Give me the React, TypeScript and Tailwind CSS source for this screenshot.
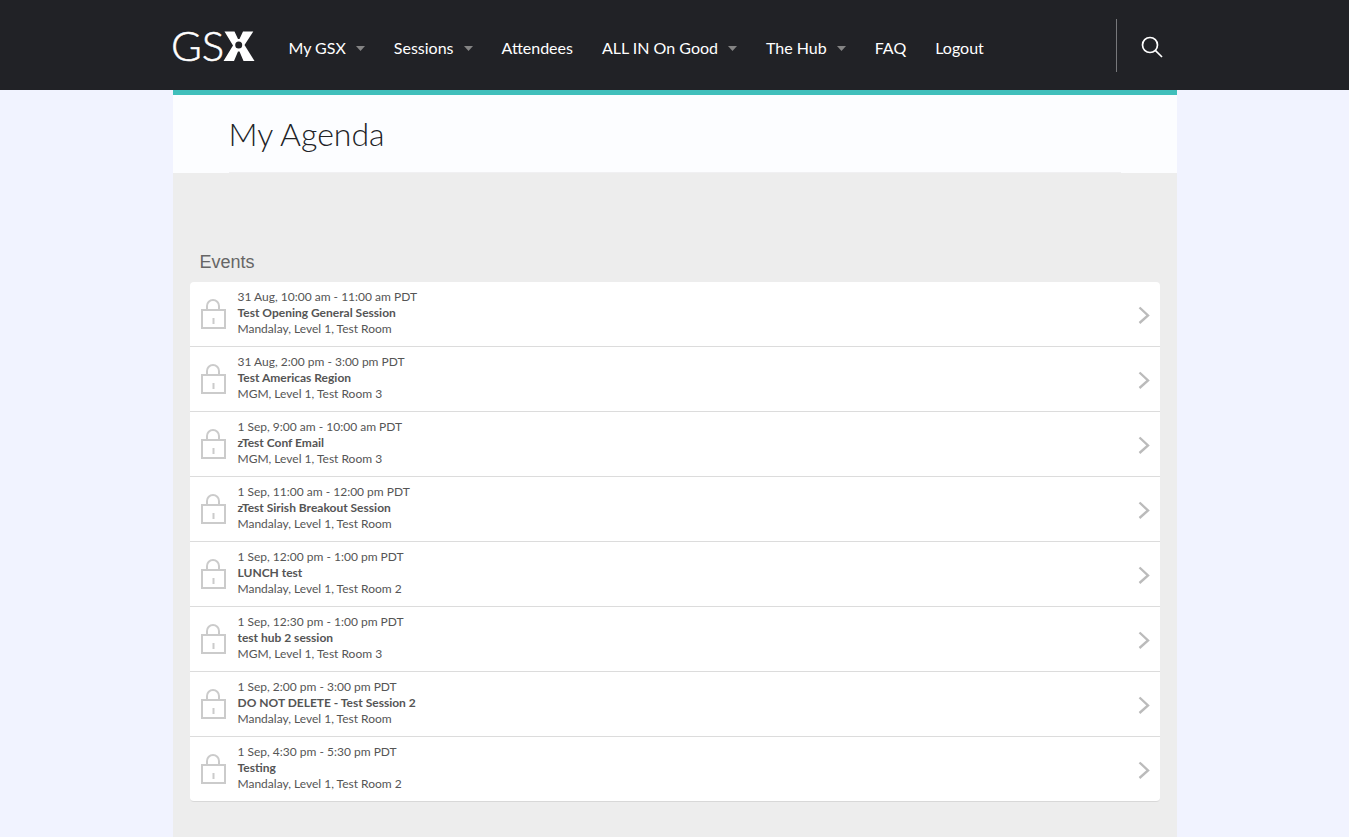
type NavItem = { label: string; menu?: boolean };

const navItems: NavItem[] = [
  { label: "My GSX", menu: true },
  { label: "Sessions", menu: true },
  { label: "Attendees" },
  { label: "ALL IN On Good", menu: true },
  { label: "The Hub", menu: true },
  { label: "FAQ" },
  { label: "Logout" },
];

const events = [
  { time: "31 Aug, 10:00 am - 11:00 am PDT", title: "Test Opening General Session", place: "Mandalay, Level 1, Test Room" },
  { time: "31 Aug, 2:00 pm - 3:00 pm PDT", title: "Test Americas Region", place: "MGM, Level 1, Test Room 3" },
  { time: "1 Sep, 9:00 am - 10:00 am PDT", title: "zTest Conf Email", place: "MGM, Level 1, Test Room 3" },
  { time: "1 Sep, 11:00 am - 12:00 pm PDT", title: "zTest Sirish Breakout Session", place: "Mandalay, Level 1, Test Room" },
  { time: "1 Sep, 12:00 pm - 1:00 pm PDT", title: "LUNCH test", place: "Mandalay, Level 1, Test Room 2" },
  { time: "1 Sep, 12:30 pm - 1:00 pm PDT", title: "test hub 2 session", place: "MGM, Level 1, Test Room 3" },
  { time: "1 Sep, 2:00 pm - 3:00 pm PDT", title: "DO NOT DELETE - Test Session 2", place: "Mandalay, Level 1, Test Room" },
  { time: "1 Sep, 4:30 pm - 5:30 pm PDT", title: "Testing", place: "Mandalay, Level 1, Test Room 2" },
];

function Logo() {
  return (
    <a href="#home" aria-label="GSX" className="-ml-0.5 block shrink-0">
      <svg width="84" height="50" viewBox="-2 -10 84 50" fill="none" className="overflow-visible">
        <text
          x="-2"
          y="31"
          fontSize="42"
          stroke="#fff"
          strokeWidth="0.5"
          className="fill-white font-['Lato',sans-serif] font-light"
        >
          GS
        </text>
        <path
          d="M51.500 1.500H61.500L65 9H66.500L70 1.500H80.300L71.500 15L81.500 31H70.500L66.500 21.500H65L61 31H50.500L60 15.500Z"
          fill="#fff"
        />
        <circle cx="65.700" cy="15" r="3.500" fill="#212226" />
      </svg>
    </a>
  );
}

function Lock() {
  return (
    <svg width="26" height="32" viewBox="0 0 26 32" fill="none" stroke="#cbcbcb" strokeWidth="2" className="mt-0.5 shrink-0" aria-hidden="true">
      <rect x="2" y="12" width="23" height="18" />
      <path d="M7 12V8A6 6 0 0 1 19 8V12" />
      <path d="M13.500 20V26" />
    </svg>
  );
}

export default function App() {
  return (
    <div className="flex min-h-screen flex-col bg-[#f1f3ff] font-['Lato','Liberation_Sans',sans-serif]">
      <header className="h-[90px] bg-[#212226]">
        <div className="mx-auto flex h-full max-w-[1004px] items-center">
          <Logo />
          <nav className="ml-[34px] flex items-center gap-[29px] pt-1.5 text-base text-white">
            {navItems.map((item) => (
              <a key={item.label} href="#nav" className="flex items-center gap-2.5 whitespace-nowrap">
                {item.label}
                {item.menu && (
                  <svg width="9" height="5" viewBox="0 0 9 5" aria-hidden="true">
                    <path d="M0 0H9L4.500 5Z" fill="#848484" />
                  </svg>
                )}
              </a>
            ))}
          </nav>
          <button type="button" aria-label="Search" className="ml-auto flex h-[53px] w-[61px] items-center border-l border-[#77787b] pl-6">
            <svg width="22" height="22" viewBox="0 0 22 22" fill="none" stroke="#fff" strokeWidth="1.700" className="mt-1">
              <circle cx="9" cy="9" r="7.500" />
              <path d="M14.300 14.300L21 21" />
            </svg>
          </button>
        </div>
      </header>

      <main className="mx-auto flex w-full max-w-[1004px] grow flex-col border-t-[5px] border-[#40bfbb] bg-[#ededed]">
        <div className="bg-[#fcfdff] px-14">
          <h1 className="border-b border-[#f0f0f2] pt-[19px] pb-[18px] text-[32px] leading-10 font-light text-[#212226]">My Agenda</h1>
        </div>
        <section className="px-[17px] pt-[77px] pb-9">
          <h2 className="mb-2 px-2.5 font-['Liberation_Sans',sans-serif] text-lg leading-6 text-[#666]">Events</h2>
          <ul className="overflow-hidden rounded border-b border-[#d8d8d8] bg-white">
            {events.map((event) => (
              <li key={event.title} className="border-b border-[#dcdcdc] last:border-b-0">
                <a href="#event" className="flex h-16 items-center px-2.5 pb-0.5">
                  <Lock />
                  <div className="ml-3 grow text-xs leading-4 text-[#555]">
                    <p>{event.time}</p>
                    <p className="font-bold">{event.title}</p>
                    <p>{event.place}</p>
                  </div>
                  <svg width="12" height="18" viewBox="0 0 12 18" fill="none" stroke="#bbb" strokeWidth="2.400" className="mt-1" aria-hidden="true">
                    <path d="M1.500 1.500L10 9.500L1.500 17" />
                  </svg>
                </a>
              </li>
            ))}
          </ul>
        </section>
      </main>
    </div>
  );
}
